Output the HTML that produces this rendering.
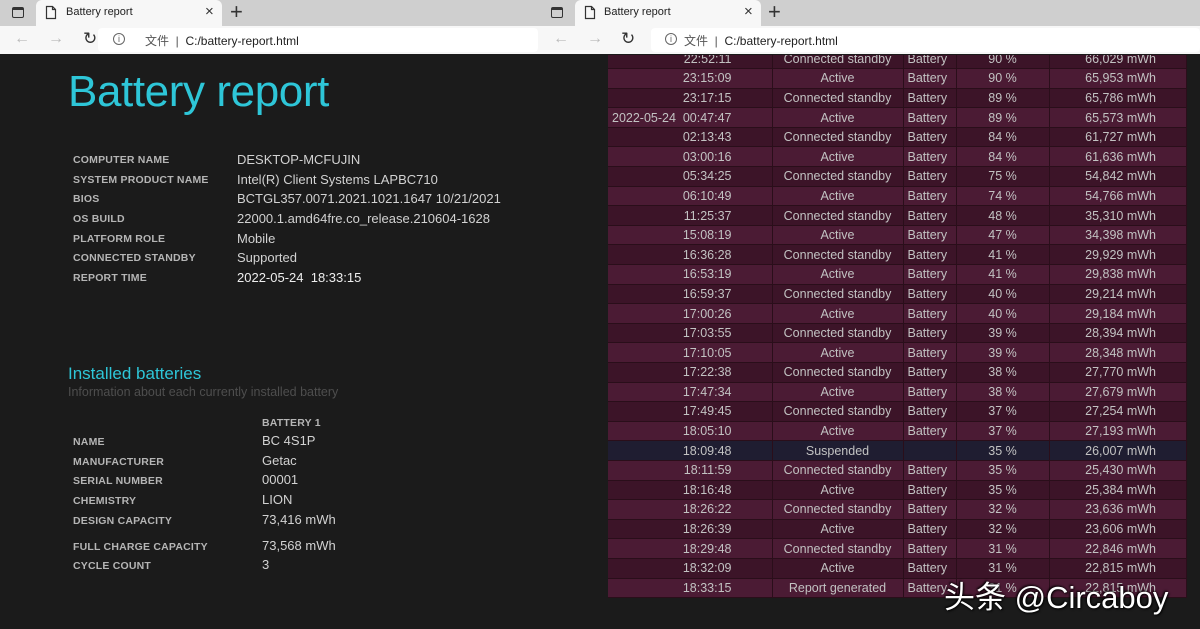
<!DOCTYPE html>
<html><head><meta charset="utf-8"><style>
*{margin:0;padding:0;box-sizing:border-box}
body{width:1200px;height:629px;overflow:hidden;background:#1b1b1b;font-family:"Liberation Sans","Noto Sans CJK SC",sans-serif;position:relative}
.a{position:absolute;white-space:nowrap}
.tabbar{position:absolute;top:0;height:26px;background:#cfcfcf}
.tab{position:absolute;top:0;height:26px;background:#f7f7f7;border-radius:6px 6px 0 0}
.addr{position:absolute;top:26px;height:28px;background:#f7f7f7}
.field{position:absolute;top:28px;height:24px;background:#fff;border-radius:4px}
.ct{font-size:11px;color:#222}
.lab{position:absolute;font-size:10.5px;font-weight:bold;color:#b5b5b5;letter-spacing:.2px}
.val{position:absolute;font-size:13px;color:#d2d2d2}
#tbl{position:absolute;left:608px;top:55px;width:579px;height:543px;overflow:hidden}
#tbl table{position:absolute;top:-6px;left:0;border-collapse:collapse;width:579px;font-size:12.5px;color:#c2c2c2}
#tbl td{height:19.6px;padding:0 4px;border-right:1px solid #2a0e1a;border-bottom:1px solid #2a0e1a;line-height:18px}
#tbl tr:nth-child(odd){background:#3c1428}
#tbl tr:nth-child(even){background:#4b1b34}
#tbl tr.s{background:#1f1d31}
td.d{width:164px;text-align:right;padding-right:40px!important;position:relative}
td.d span{position:absolute;left:4px}
td.st{width:131px;text-align:center}
td.p{width:53px}
td.c{width:93px;text-align:center}
td.e{text-align:right;padding-right:30px!important}
</style></head><body>
<div class="tabbar" style="left:0;width:539px"></div>
<div class="tabbar" style="left:539px;width:661px"></div>
<div class="tab" style="left:36px;width:186px"></div>
<div class="tab" style="left:575px;width:186px"></div>
<div class="a" style="left:12px;top:7px;width:12px;height:11px;border:1.5px solid #333;border-top-width:3px;border-radius:2px"></div>
<div class="a" style="left:551px;top:7px;width:12px;height:11px;border:1.5px solid #333;border-top-width:3px;border-radius:2px"></div>
<svg class="a" style="left:45px;top:5px" width="12" height="15"><path d="M1.5 1.5h6l3 3v9h-9z M7.5 1.5v3h3" fill="none" stroke="#333" stroke-width="1.2"/></svg>
<svg class="a" style="left:584px;top:5px" width="12" height="15"><path d="M1.5 1.5h6l3 3v9h-9z M7.5 1.5v3h3" fill="none" stroke="#333" stroke-width="1.2"/></svg>
<div class="a ct" style="left:66px;top:6px">Battery report</div>
<div class="a ct" style="left:604px;top:6px">Battery report</div>
<div class="a" style="left:205px;top:3px;font-size:15px;color:#333">×</div>
<div class="a" style="left:744px;top:3px;font-size:15px;color:#333">×</div>
<div class="a" style="left:230px;top:-1px;font-size:22px;color:#333;font-weight:300">+</div>
<div class="a" style="left:768px;top:-1px;font-size:22px;color:#333;font-weight:300">+</div>
<div class="addr" style="left:0;width:1200px"></div>
<div class="field" style="left:98px;width:440px"></div>
<div class="field" style="left:651px;width:549px"></div>
<div class="a" style="left:14px;top:30px;font-size:16px;color:#bbb">←</div>
<div class="a" style="left:48px;top:30px;font-size:16px;color:#bbb">→</div>
<div class="a" style="left:83px;top:29px;font-size:17px;color:#333">↻</div>
<div class="a" style="left:553px;top:30px;font-size:16px;color:#bbb">←</div>
<div class="a" style="left:587px;top:30px;font-size:16px;color:#bbb">→</div>
<div class="a" style="left:621px;top:29px;font-size:17px;color:#333">↻</div>
<div class="a" style="left:113px;top:33px;width:12px;height:12px;border:1px solid #666;border-radius:50%;font-size:9px;line-height:10px;text-align:center;color:#666">i</div>
<div class="a" style="left:665px;top:33px;width:12px;height:12px;border:1px solid #666;border-radius:50%;font-size:9px;line-height:10px;text-align:center;color:#666">i</div>
<div class="a" style="left:145px;top:32px;font-size:12px;color:#555">文件 &nbsp;|&nbsp; <span style="color:#222">C:/battery-report.html</span></div>
<div class="a" style="left:684px;top:32px;font-size:12px;color:#555">文件 &nbsp;|&nbsp; <span style="color:#222">C:/battery-report.html</span></div>

<div class="a" style="left:68px;top:67px;font-size:44px;color:#2ec6d8;letter-spacing:-0.4px">Battery report</div>
<div class="lab" style="left:73px;top:154px">COMPUTER NAME</div><div class="val" style="left:237px;top:152px">DESKTOP-MCFUJIN</div>
<div class="lab" style="left:73px;top:174px">SYSTEM PRODUCT NAME</div><div class="val" style="left:237px;top:172px">Intel(R) Client Systems LAPBC710</div>
<div class="lab" style="left:73px;top:193px">BIOS</div><div class="val" style="left:237px;top:191px">BCTGL357.0071.2021.1021.1647 10/21/2021</div>
<div class="lab" style="left:73px;top:213px">OS BUILD</div><div class="val" style="left:237px;top:211px">22000.1.amd64fre.co_release.210604-1628</div>
<div class="lab" style="left:73px;top:233px">PLATFORM ROLE</div><div class="val" style="left:237px;top:231px">Mobile</div>
<div class="lab" style="left:73px;top:252px">CONNECTED STANDBY</div><div class="val" style="left:237px;top:250px">Supported</div>
<div class="lab" style="left:73px;top:272px">REPORT TIME</div><div class="val" style="left:237px;top:270px;color:#eee">2022-05-24&nbsp; 18:33:15</div>

<div class="a" style="left:68px;top:364px;font-size:17px;color:#2ec6d8">Installed batteries</div>
<div class="a" style="left:68px;top:385px;font-size:12.5px;color:#4e4e4e">Information about each currently installed battery</div>
<div class="lab" style="left:262px;top:417px">BATTERY 1</div>
<div class="lab" style="left:73px;top:436px">NAME</div><div class="val" style="left:262px;top:433px">BC 4S1P</div>
<div class="lab" style="left:73px;top:456px">MANUFACTURER</div><div class="val" style="left:262px;top:453px">Getac</div>
<div class="lab" style="left:73px;top:475px">SERIAL NUMBER</div><div class="val" style="left:262px;top:472px">00001</div>
<div class="lab" style="left:73px;top:495px">CHEMISTRY</div><div class="val" style="left:262px;top:492px">LION</div>
<div class="lab" style="left:73px;top:515px">DESIGN CAPACITY</div><div class="val" style="left:262px;top:512px">73,416 mWh</div>
<div class="lab" style="left:73px;top:541px">FULL CHARGE CAPACITY</div><div class="val" style="left:262px;top:538px">73,568 mWh</div>
<div class="lab" style="left:73px;top:560px">CYCLE COUNT</div><div class="val" style="left:262px;top:557px">3</div>

<div id="tbl"><table>
<tr><td class="d">22:52:11</td><td class="st">Connected standby</td><td class="p">Battery</td><td class="c">90 %</td><td class="e">66,029 mWh</td></tr>
<tr><td class="d">23:15:09</td><td class="st">Active</td><td class="p">Battery</td><td class="c">90 %</td><td class="e">65,953 mWh</td></tr>
<tr><td class="d">23:17:15</td><td class="st">Connected standby</td><td class="p">Battery</td><td class="c">89 %</td><td class="e">65,786 mWh</td></tr>
<tr><td class="d"><span>2022-05-24</span>00:47:47</td><td class="st">Active</td><td class="p">Battery</td><td class="c">89 %</td><td class="e">65,573 mWh</td></tr>
<tr><td class="d">02:13:43</td><td class="st">Connected standby</td><td class="p">Battery</td><td class="c">84 %</td><td class="e">61,727 mWh</td></tr>
<tr><td class="d">03:00:16</td><td class="st">Active</td><td class="p">Battery</td><td class="c">84 %</td><td class="e">61,636 mWh</td></tr>
<tr><td class="d">05:34:25</td><td class="st">Connected standby</td><td class="p">Battery</td><td class="c">75 %</td><td class="e">54,842 mWh</td></tr>
<tr><td class="d">06:10:49</td><td class="st">Active</td><td class="p">Battery</td><td class="c">74 %</td><td class="e">54,766 mWh</td></tr>
<tr><td class="d">11:25:37</td><td class="st">Connected standby</td><td class="p">Battery</td><td class="c">48 %</td><td class="e">35,310 mWh</td></tr>
<tr><td class="d">15:08:19</td><td class="st">Active</td><td class="p">Battery</td><td class="c">47 %</td><td class="e">34,398 mWh</td></tr>
<tr><td class="d">16:36:28</td><td class="st">Connected standby</td><td class="p">Battery</td><td class="c">41 %</td><td class="e">29,929 mWh</td></tr>
<tr><td class="d">16:53:19</td><td class="st">Active</td><td class="p">Battery</td><td class="c">41 %</td><td class="e">29,838 mWh</td></tr>
<tr><td class="d">16:59:37</td><td class="st">Connected standby</td><td class="p">Battery</td><td class="c">40 %</td><td class="e">29,214 mWh</td></tr>
<tr><td class="d">17:00:26</td><td class="st">Active</td><td class="p">Battery</td><td class="c">40 %</td><td class="e">29,184 mWh</td></tr>
<tr><td class="d">17:03:55</td><td class="st">Connected standby</td><td class="p">Battery</td><td class="c">39 %</td><td class="e">28,394 mWh</td></tr>
<tr><td class="d">17:10:05</td><td class="st">Active</td><td class="p">Battery</td><td class="c">39 %</td><td class="e">28,348 mWh</td></tr>
<tr><td class="d">17:22:38</td><td class="st">Connected standby</td><td class="p">Battery</td><td class="c">38 %</td><td class="e">27,770 mWh</td></tr>
<tr><td class="d">17:47:34</td><td class="st">Active</td><td class="p">Battery</td><td class="c">38 %</td><td class="e">27,679 mWh</td></tr>
<tr><td class="d">17:49:45</td><td class="st">Connected standby</td><td class="p">Battery</td><td class="c">37 %</td><td class="e">27,254 mWh</td></tr>
<tr><td class="d">18:05:10</td><td class="st">Active</td><td class="p">Battery</td><td class="c">37 %</td><td class="e">27,193 mWh</td></tr>
<tr class="s"><td class="d">18:09:48</td><td class="st">Suspended</td><td class="p"></td><td class="c">35 %</td><td class="e">26,007 mWh</td></tr>
<tr><td class="d">18:11:59</td><td class="st">Connected standby</td><td class="p">Battery</td><td class="c">35 %</td><td class="e">25,430 mWh</td></tr>
<tr><td class="d">18:16:48</td><td class="st">Active</td><td class="p">Battery</td><td class="c">35 %</td><td class="e">25,384 mWh</td></tr>
<tr><td class="d">18:26:22</td><td class="st">Connected standby</td><td class="p">Battery</td><td class="c">32 %</td><td class="e">23,636 mWh</td></tr>
<tr><td class="d">18:26:39</td><td class="st">Active</td><td class="p">Battery</td><td class="c">32 %</td><td class="e">23,606 mWh</td></tr>
<tr><td class="d">18:29:48</td><td class="st">Connected standby</td><td class="p">Battery</td><td class="c">31 %</td><td class="e">22,846 mWh</td></tr>
<tr><td class="d">18:32:09</td><td class="st">Active</td><td class="p">Battery</td><td class="c">31 %</td><td class="e">22,815 mWh</td></tr>
<tr><td class="d">18:33:15</td><td class="st">Report generated</td><td class="p">Battery</td><td class="c">31 %</td><td class="e">22,815 mWh</td></tr>
</table></div>
<div class="a" style="left:944px;top:572px;font-size:31px;color:#fff;font-family:'Liberation Sans','Noto Sans CJK SC',sans-serif;text-shadow:1px 1px 2px #000,-1px -1px 2px #000">头条 @Circaboy</div>
</body></html>
